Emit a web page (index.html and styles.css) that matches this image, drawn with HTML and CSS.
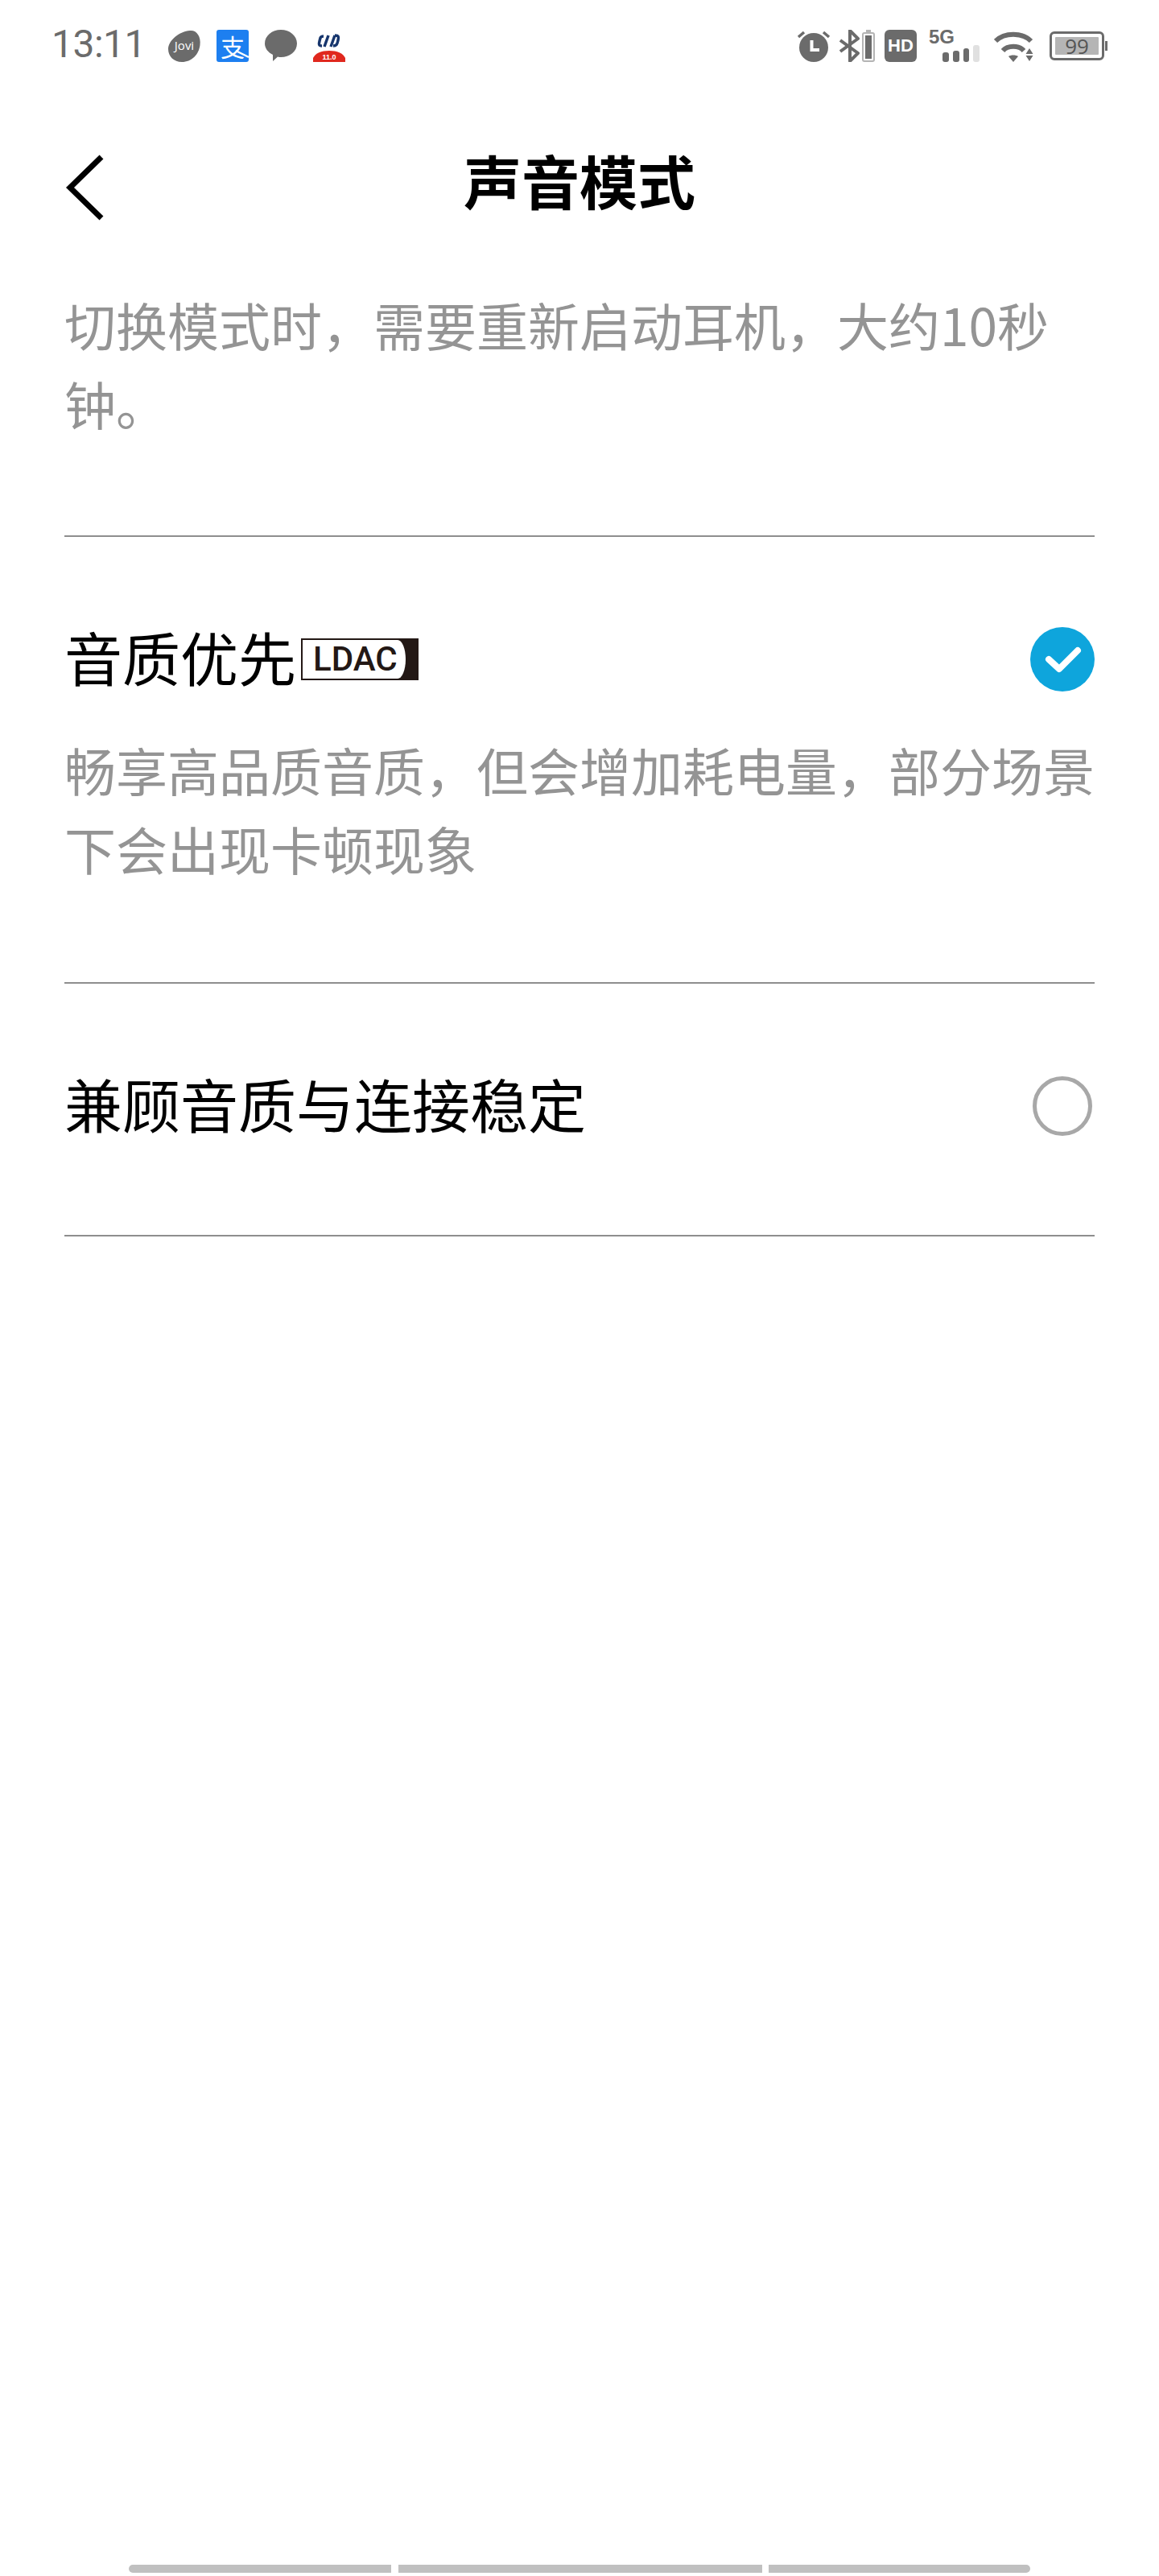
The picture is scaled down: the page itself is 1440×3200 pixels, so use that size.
FILE: index.html
```html
<!DOCTYPE html>
<html lang="zh-CN">
<head>
  <meta charset="UTF-8" />
  <meta name="viewport" content="width=device-width, initial-scale=1" />
  <title>声音模式</title>
  <link rel="stylesheet" href="styles.css">
</head>
<body>
  <div class="screen">

    <div class="status-bar">
      <div class="status-left">
        <span class="clock">13:11</span>
        <svg class="ic" viewBox="0 0 40 40">
          <path d="M27 1C35 0 41 8 39.500 19C38 31 29 40 17 40C7 40 0 33 0 24C0 13 14 2 27 1Z" fill="#6b6b6b"/>
          <text x="20" y="25" class="ic-jovi">Jovi</text>
        </svg>
        <svg class="ic" viewBox="0 0 40 40">
          <rect width="40" height="40" rx="3" fill="#1d7ff0"/>
          <text x="20" y="33" class="ic-pay">支</text>
          <path d="M24 26L40 34" stroke="#fff" stroke-width="2.500" fill="none"/>
        </svg>
        <svg class="ic" viewBox="0 0 40 40">
          <path d="M20 0C31 0 40 7.500 40 17C40 27 31 34 20 34C18.500 34 17.500 34 16 33.500L10 39L10 31C4 28 0 23 0 17C0 7.500 9 0 20 0Z" fill="#6b6b6b"/>
        </svg>
        <svg class="ic" viewBox="0 0 40 40">
          <path d="M13 8C9 8 9 10 8 14C7 18 7 20 11 20M19 7L14 21M27 7L22 21M27 7C32 7 32 9 31 13C30 18 29 20 25 20" stroke="#17366d" stroke-width="3.500" fill="none"/>
          <path d="M0 40L0 35C3 29 10 26 20 26C30 26 37 29 40 35L40 40Z" fill="#e0281e"/>
          <text x="20" y="37" class="ic-ver">11.0</text>
        </svg>
      </div>

      <div class="status-right">
        <svg class="ic" viewBox="0 0 40 40">
          <circle cx="20" cy="22" r="18" fill="#6b6b6b"/>
          <path d="M17.500 13V25H27" stroke="#fff" stroke-width="4" fill="none"/>
          <path d="M1 9L8 3M39 9L32 3" stroke="#6b6b6b" stroke-width="3.500" fill="none"/>
        </svg>
        <svg class="ic-bt" viewBox="0 0 44 40">
          <path d="M1 13L23 29L13 39V1L23 11L1 27" stroke="#6b6b6b" stroke-width="4" fill="none" stroke-linejoin="round"/>
          <rect x="29" y="4" width="14" height="35" rx="2" fill="none" stroke="#b4b4b4" stroke-width="2"/>
          <rect x="33" y="0" width="6" height="3" fill="#b4b4b4"/>
          <rect x="32" y="7" width="8" height="29" fill="#6b6b6b"/>
        </svg>
        <span class="hd">HD</span>
        <div class="net">
          <span class="net-label">5G</span>
          <div class="net-bars">
            <i class="bar"></i>
            <i class="bar bar-2"></i>
            <i class="bar bar-3"></i>
            <i class="bar bar-4"></i>
          </div>
        </div>
        <svg class="ic-wifi" viewBox="0 0 49 40">
          <path d="M2 14C13 3 35 3 46 14" stroke="#6b6b6b" stroke-width="6" fill="none"/>
          <path d="M11 26C17 19 31 19 37 26" stroke="#6b6b6b" stroke-width="6" fill="none"/>
          <path d="M18 33C21 31 27 31 30 33L24 40Z" fill="#6b6b6b"/>
          <path d="M44 23L48.500 30H39.500ZM39.500 32H48.500L44 39Z" fill="#6b6b6b"/>
        </svg>
        <div class="battery">
          <div class="battery-body"><span class="battery-level">99</span></div>
          <i class="battery-nub"></i>
        </div>
      </div>
    </div>

    <div class="nav">
      <svg class="nav-back" viewBox="0 0 50 84">
        <path d="M46 4L7 42L46 80" stroke="#000" stroke-width="7" fill="none"/>
      </svg>
      <h1 class="nav-title">声音模式</h1>
    </div>

    <div class="content">
      <p class="tip tip-top">切换模式时，需要重新启动耳机，大约10秒钟。</p>

      <div class="mode">
        <div class="mode-row">
          <div class="mode-name">
            <span class="mode-label">音质优先</span>
            <span class="ldac"><span class="ldac-text">LDAC</span></span>
          </div>
          <svg class="check" viewBox="0 0 80 80">
            <circle cx="40" cy="40" r="40" fill="#0ea5dc"/>
            <path d="M23 40L36 52L59 29" stroke="#fff" stroke-width="8" stroke-linecap="round" stroke-linejoin="round" fill="none"/>
          </svg>
        </div>
        <p class="tip">畅享高品质音质，但会增加耗电量，部分场景下会出现卡顿现象</p>
      </div>

      <div class="mode mode-last">
        <div class="mode-row">
          <div class="mode-name"><span class="mode-label">兼顾音质与连接稳定</span></div>
          <i class="radio"></i>
        </div>
      </div>
    </div>

    <div class="home-bar">
      <i class="home-seg home-seg-l"></i>
      <i class="home-seg home-seg-m"></i>
      <i class="home-seg home-seg-r"></i>
    </div>

  </div>
</body>
</html>
```

FILE: styles.css
```css
* { box-sizing: border-box; margin: 0; padding: 0; }

body {
  background: #fff;
  font-family: "Noto Sans CJK SC", "Liberation Sans", sans-serif;
}

.screen {
  width: 1440px;
  height: 3200px;
  display: flex;
  flex-direction: column;
}

/* status bar */
.status-bar {
  height: 114px;
  padding: 0 64px;
  display: flex;
  justify-content: space-between;
  align-items: center;
}
.status-left, .status-right { display: flex; align-items: center; }
.status-left { gap: 20px; }
.status-right { gap: 12px; }

.clock {
  width: 125px;
  margin-bottom: 4px;
  font-family: Roboto, sans-serif;
  font-size: 48px;
  line-height: 56px;
  letter-spacing: -0.5px;
  color: #6b6b6b;
  white-space: nowrap;
}

.ic { width: 40px; height: 40px; display: block; overflow: visible; }
.ic-bt { width: 44px; height: 40px; display: block; }
.ic-wifi { width: 49px; height: 40px; display: block; margin-left: 6px; }

.ic-jovi {
  font-family: "Open Sans", sans-serif;
  font-size: 15px;
  fill: #fff;
  text-anchor: middle;
}
.ic-pay {
  font-family: "Noto Sans CJK SC", sans-serif;
  font-size: 30px;
  fill: #fff;
  text-anchor: middle;
}
.ic-ver {
  font-family: "Liberation Sans", sans-serif;
  font-size: 9px;
  font-weight: 700;
  fill: #fff;
  text-anchor: middle;
}

.hd {
  width: 40px;
  height: 40px;
  border-radius: 6px;
  background: #6b6b6b;
  color: #fff;
  font-family: "Liberation Sans", sans-serif;
  font-size: 22px;
  font-weight: 700;
  line-height: 40px;
  text-align: center;
}

.net {
  width: 63px;
  height: 40px;
  margin-left: 3px;
  display: flex;
  flex-direction: column;
  justify-content: space-between;
}
.net-label {
  font-family: "Liberation Sans", sans-serif;
  font-size: 24px;
  font-weight: 700;
  line-height: 18px;
  color: #6b6b6b;
}
.net-bars {
  display: flex;
  align-items: flex-end;
  gap: 5px;
  padding-left: 17px;
}
.bar {
  width: 8px;
  height: 12px;
  border-radius: 3px;
  background: #6b6b6b;
}
.bar-2 { height: 14px; }
.bar-3 { height: 17px; }
.bar-4 { height: 21px; background: #e0e0e0; }

.battery {
  margin-left: 8px;
  display: flex;
  align-items: center;
}
.battery-body {
  width: 68px;
  height: 36px;
  padding: 4px;
  border: 3px solid #6b6b6b;
  border-radius: 6px;
}
.battery-level {
  display: block;
  height: 100%;
  background: #b5b5b5;
  border-radius: 1px;
  color: #555;
  font-family: "Open Sans", sans-serif;
  font-size: 26px;
  line-height: 22px;
  text-align: center;
}
.battery-nub {
  width: 3px;
  height: 12px;
  margin-left: 1px;
  background: #6b6b6b;
}

/* nav */
.nav {
  height: 230px;
  padding: 0 80px;
  display: grid;
  grid-template-columns: 1fr auto 1fr;
  align-items: center;
}
.nav-back {
  width: 50px;
  height: 84px;
  display: block;
  margin-top: 8px;
}
.nav-title {
  margin-bottom: 12px;
  font-size: 72px;
  font-weight: 700;
  line-height: 80px;
  color: #000;
}

/* modes */
.content { padding: 9px 80px 0; }

.tip {
  font-size: 64px;
  line-height: 98px;
  color: #949494;
}
.tip-top { padding-bottom: 116px; }

.mode {
  padding: 112px 0 118px;
  border-top: 2px solid #8e8e8e;
}
.mode-last {
  padding-bottom: 120px;
  border-bottom: 2px solid #8e8e8e;
}
.mode-row {
  height: 80px;
  margin-bottom: 47px;
  display: flex;
  justify-content: space-between;
  align-items: center;
}
.mode-last .mode-row { margin-bottom: 0; }

.mode-name {
  display: flex;
  align-items: center;
  font-size: 72px;
  line-height: 80px;
  color: #000;
}
.mode-label { margin-bottom: 8px; }

/* badge: dark plate with a white inset, the right edge of the inset is rounded */
.ldac {
  width: 146px;
  height: 52px;
  margin-left: 6px;
  padding: 2px 16px 2px 2px;
  background: #231815;
  display: flex;
}
.ldac-text {
  flex: 1;
  padding-left: 13px;
  background: #fff;
  border-radius: 0 10px 10px 0 / 0 24px 24px 0;
  font-family: Roboto, sans-serif;
  font-size: 42px;
  font-weight: 500;
  line-height: 48px;
  color: #231815;
  white-space: nowrap;
}

.check { width: 80px; height: 80px; display: block; }

.radio {
  width: 74px;
  height: 74px;
  margin-right: 3px;
  border: 5px solid #a8a8a8;
  border-radius: 50%;
}

/* gesture bar */
.home-bar {
  margin-top: auto;
  padding: 0 160px 4px;
  display: flex;
  justify-content: space-between;
  gap: 7px;
}
.home-seg {
  height: 10px;
  background: #c0c0c0;
}
.home-seg-l { width: 326px; border-radius: 5px 0 0 5px; }
.home-seg-m { width: 452px; }
.home-seg-r { width: 325px; border-radius: 0 5px 5px 0; }
```
